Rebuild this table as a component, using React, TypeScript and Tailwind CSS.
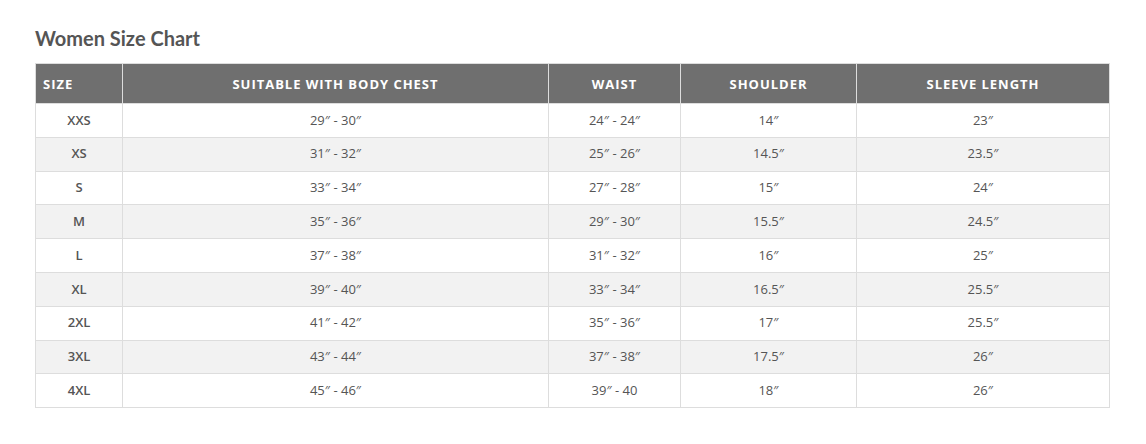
const rows = [
  ["XXS", "29″ - 30″", "24″ - 24″", "14″", "23″"],
  ["XS", "31″ - 32″", "25″ - 26″", "14.5″", "23.5″"],
  ["S", "33″ - 34″", "27″ - 28″", "15″", "24″"],
  ["M", "35″ - 36″", "29″ - 30″", "15.5″", "24.5″"],
  ["L", "37″ - 38″", "31″ - 32″", "16″", "25″"],
  ["XL", "39″ - 40″", "33″ - 34″", "16.5″", "25.5″"],
  ["2XL", "41″ - 42″", "35″ - 36″", "17″", "25.5″"],
  ["3XL", "43″ - 44″", "37″ - 38″", "17.5″", "26″"],
  ["4XL", "45″ - 46″", "39″ - 40", "18″", "26″"],
]

const headers = ["Suitable with body chest", "Waist", "Shoulder", "Sleeve length"]

export default function App() {
  return (
    <div className="min-h-screen bg-white px-[35px] pt-[25px] font-['Open_Sans',sans-serif] text-[#555]">
      <h2 className="font-['Lato',sans-serif] text-[20px] font-bold leading-[26px] text-[#555]">
        Women Size Chart
      </h2>
      <table className="mt-[12px] w-[1074px] table-fixed border-collapse text-[13px]">
        <colgroup>
          <col className="w-[87px]" />
          <col className="w-[426px]" />
          <col className="w-[132px]" />
          <col className="w-[176px]" />
          <col className="w-[253px]" />
        </colgroup>
        <thead>
          <tr className="h-[40px] bg-[#6f6f6f] text-white">
            <th className="border border-[#ddd] px-[7px] pt-[2px] text-left text-[13px] font-bold uppercase tracking-[0.075em]">
              Size
            </th>
            {headers.map((h) => (
              <th
                key={h}
                className="border border-[#ddd] pt-[2px] text-center text-[13px] font-bold uppercase tracking-[0.075em]"
              >
                {h}
              </th>
            ))}
          </tr>
        </thead>
        <tbody>
          {rows.map((r, i) => (
            <tr key={r[0]} className={i % 2 === 1 ? "h-[33.8px] bg-[#f2f2f2]" : "h-[33.8px] bg-white"}>
              {r.map((c, j) => (
                <td
                  key={j}
                  className={
                    j === 0
                      ? "border border-[#ddd] text-center font-semibold"
                      : "border border-[#ddd] text-center"
                  }
                >
                  {c}
                </td>
              ))}
            </tr>
          ))}
        </tbody>
      </table>
    </div>
  )
}
